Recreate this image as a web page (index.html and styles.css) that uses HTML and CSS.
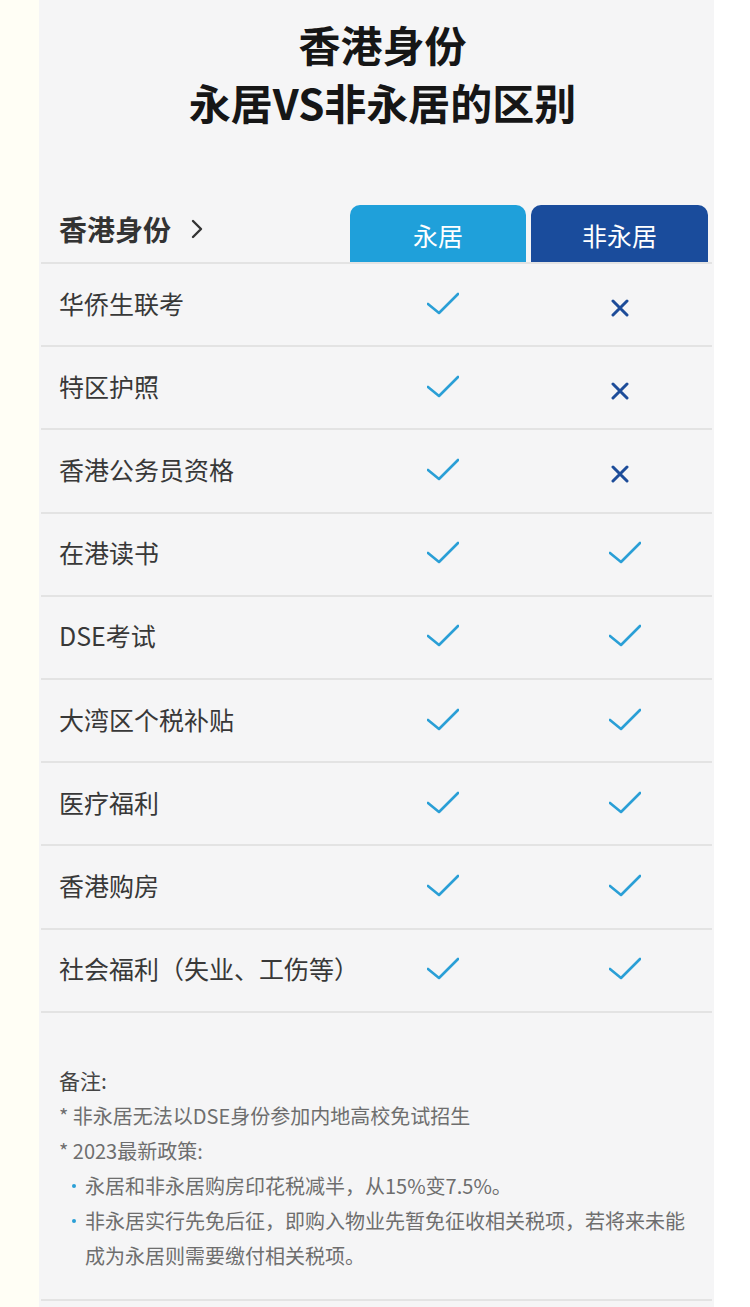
FILE: index.html
```html
<!DOCTYPE html>
<html lang="zh-CN">
<head>
<meta charset="utf-8">
<title>香港身份 永居VS非永居的区别</title>
<link rel="stylesheet" href="styles.css">
</head>
<body>
<div class="gutter"></div>
<main class="page">
  <h1 class="title">香港身份<br>永居VS非永居的区别</h1>

  <div class="table">
    <div class="row head">
      <div class="head-label">香港身份
        <svg class="chev" width="12" height="20" viewBox="0 0 12 20"><path d="M2 2 L10 10 L2 18" fill="none" stroke="#333" stroke-width="2.4" stroke-linecap="round" stroke-linejoin="round"/></svg>
      </div>
      <div class="tab tab-pr">永居</div>
      <div class="tab tab-np">非永居</div>
    </div>

    <div class="row"><div class="label">华侨生联考</div><div class="cell"><svg class="ok" viewBox="0 0 32 24"><path d="M1 12 L12 21 L31 2"/></svg></div><div class="cell"><svg class="no" viewBox="0 0 18 18"><path d="M2 2 L16 16 M16 2 L2 16"/></svg></div></div>
    <div class="row"><div class="label">特区护照</div><div class="cell"><svg class="ok" viewBox="0 0 32 24"><path d="M1 12 L12 21 L31 2"/></svg></div><div class="cell"><svg class="no" viewBox="0 0 18 18"><path d="M2 2 L16 16 M16 2 L2 16"/></svg></div></div>
    <div class="row"><div class="label">香港公务员资格</div><div class="cell"><svg class="ok" viewBox="0 0 32 24"><path d="M1 12 L12 21 L31 2"/></svg></div><div class="cell"><svg class="no" viewBox="0 0 18 18"><path d="M2 2 L16 16 M16 2 L2 16"/></svg></div></div>
    <div class="row"><div class="label">在港读书</div><div class="cell"><svg class="ok" viewBox="0 0 32 24"><path d="M1 12 L12 21 L31 2"/></svg></div><div class="cell"><svg class="ok" viewBox="0 0 32 24"><path d="M1 12 L12 21 L31 2"/></svg></div></div>
    <div class="row"><div class="label">DSE考试</div><div class="cell"><svg class="ok" viewBox="0 0 32 24"><path d="M1 12 L12 21 L31 2"/></svg></div><div class="cell"><svg class="ok" viewBox="0 0 32 24"><path d="M1 12 L12 21 L31 2"/></svg></div></div>
    <div class="row"><div class="label">大湾区个税补贴</div><div class="cell"><svg class="ok" viewBox="0 0 32 24"><path d="M1 12 L12 21 L31 2"/></svg></div><div class="cell"><svg class="ok" viewBox="0 0 32 24"><path d="M1 12 L12 21 L31 2"/></svg></div></div>
    <div class="row"><div class="label">医疗福利</div><div class="cell"><svg class="ok" viewBox="0 0 32 24"><path d="M1 12 L12 21 L31 2"/></svg></div><div class="cell"><svg class="ok" viewBox="0 0 32 24"><path d="M1 12 L12 21 L31 2"/></svg></div></div>
    <div class="row"><div class="label">香港购房</div><div class="cell"><svg class="ok" viewBox="0 0 32 24"><path d="M1 12 L12 21 L31 2"/></svg></div><div class="cell"><svg class="ok" viewBox="0 0 32 24"><path d="M1 12 L12 21 L31 2"/></svg></div></div>
    <div class="row"><div class="label">社会福利（失业、工伤等）</div><div class="cell"><svg class="ok" viewBox="0 0 32 24"><path d="M1 12 L12 21 L31 2"/></svg></div><div class="cell"><svg class="ok" viewBox="0 0 32 24"><path d="M1 12 L12 21 L31 2"/></svg></div></div>
  </div>

  <section class="notes">
    <p class="notes-title">备注:</p>
    <p class="note">* 非永居无法以DSE身份参加内地高校免试招生</p>
    <p class="note">* 2023最新政策:</p>
    <ul class="bullets">
      <li><span class="dot"></span><span class="btext">永居和非永居购房印花税减半，从15%变7.5%。</span></li>
      <li><span class="dot"></span><span class="btext">非永居实行先免后征，即购入物业先暂免征收相关税项，若将来未能成为永居则需要缴付相关税项。</span></li>
    </ul>
  </section>
</main>
</body>
</html>
```
FILE: styles.css
```css
html, body {
  margin: 0;
  padding: 0;
}
body {
  display: flex;
  background: #ffffff;
  font-family: "Noto Sans CJK SC", "Noto Sans", sans-serif;
  min-height: 1307px;
}
.gutter {
  width: 39px;
  flex: none;
  background: #fffef5;
}
.page {
  width: 675px;
  flex: none;
  background: #f5f5f6;
  min-height: 1307px;
}
.title {
  margin: 0;
  padding: 15px 0 0 12px;
  font-size: 42px;
  line-height: 58px;
  font-weight: 700;
  text-align: center;
  color: #161616;
}
.table {
  margin: 74px 2px 0;
}
.row {
  display: grid;
  grid-template-columns: minmax(0, 1fr) 176px 177px;
  column-gap: 5px;
  padding: 0 4px 0 18px;
  border-bottom: 2px solid #e3e3e3;
  height: 81.2px;
  align-items: center;
}
.row.head {
  height: 57px;
  align-items: end;
}
.head-label {
  align-self: center;
  display: flex;
  align-items: center;
  gap: 20px;
  font-size: 28px;
  font-weight: 700;
  color: #333;
  line-height: 40px;
  padding-bottom: 10px;
}
.chev {
  display: block;
}
.tab {
  height: 57px;
  border-radius: 10px 10px 0 0;
  color: #fff;
  font-size: 25px;
  display: flex;
  align-items: center;
  justify-content: center;
  padding-top: 2px;
  box-sizing: border-box;
}
.tab-pr { background: #1fa0da; }
.tab-np { background: #1a4c9c; }
.label {
  font-size: 25px;
  color: #383838;
  line-height: 36px;
  white-space: nowrap;
  padding-bottom: 4px;
}
.cell {
  display: flex;
  justify-content: center;
  align-items: center;
}
.ok {
  width: 32px;
  height: 24px;
  margin-left: 10px;
  margin-bottom: 2px;
  fill: none;
  stroke: #2a9fd6;
  stroke-width: 2.6;
  stroke-linecap: round;
  stroke-linejoin: round;
}
.no {
  width: 18px;
  height: 18px;
  margin-top: 6px;
  fill: none;
  stroke: #1d4c99;
  stroke-width: 3;
  stroke-linecap: round;
}
.notes {
  margin: 0 2px;
  padding: 50px 16px 26px 18px;
  border-bottom: 2px solid #e3e3e3;
  font-size: 20px;
  line-height: 35px;
  color: #6e6e6e;
}
.notes p {
  margin: 0;
}
.notes-title {
  color: #444;
  font-size: 21px;
}
.bullets {
  list-style: none;
  margin: 0;
  padding: 0;
}
.bullets li {
  display: flex;
  align-items: flex-start;
}
.dot {
  flex: none;
  width: 4px;
  height: 4px;
  border-radius: 50%;
  background: #2a9fd6;
  margin: 16px 9px 0 13px;
}
.btext {
  flex: 1;
}
```
